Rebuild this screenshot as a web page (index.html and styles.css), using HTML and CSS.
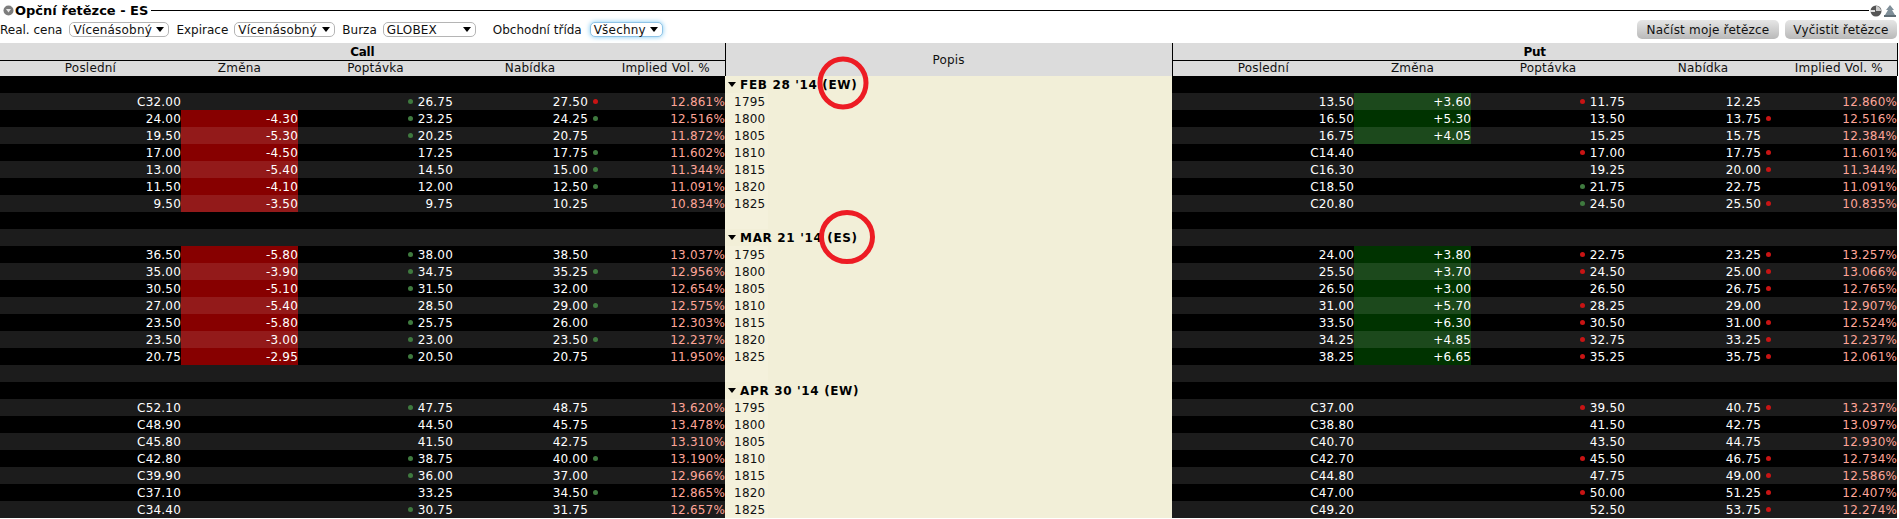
FILE: index.html
```html
<!DOCTYPE html>
<html lang="cs">

<head>
  <meta charset="UTF-8">
  <title>Opční řetězce - ES</title>
  <link rel="stylesheet" href="styles.css">
</head>

<body>
  <div class="titlebar">
    <svg class="title-icon" width="11" height="11" viewBox="0 0 11 11">
      <circle cx="5.5" cy="5.5" r="5" fill="#7d7d7d" />
      <path d="M3 4 H8 L5.5 7.5 Z" fill="#e8e8e8" />
    </svg>
    <span class="title">Opční řetězce - ES</span>
    <span class="title-line"></span>
    <svg class="title-tool" width="14" height="12" viewBox="0 0 14 12">
      <circle cx="7" cy="6" r="5.5" fill="#555" />
      <path d="M7 1 A5 5 0 0 1 12 6 L7 6 Z" fill="#ccc" />
      <rect x="1" y="5" width="5" height="2" fill="#ddd" />
    </svg>
    <svg class="title-tool" width="14" height="12" viewBox="0 0 14 12">
      <path d="M7 0 L11 5 H9 L12 10 H2 L5 5 H3 Z" fill="#7f8f99" />
      <rect x="1" y="10" width="12" height="2" fill="#5f6d75" />
    </svg>
  </div>

  <div class="toolbar">
    <label class="first">Real. cena</label>
    <div class="select w100">Vícenásobný<i></i></div>
    <label>Expirace</label>
    <div class="select w101">Vícenásobný<i></i></div>
    <label>Burza</label>
    <div class="select w93">GLOBEX<i></i></div>
    <label class="far">Obchodní třída</label>
    <div class="select w73 focus">Všechny<i></i></div>
    <div class="buttons">
      <button>Načíst moje řetězce</button>
      <button class="clear">Vyčistit řetězce</button>
    </div>
  </div>

  <div class="chain">
    <table>
      <colgroup>
        <col class="c181"><col class="c117"><col class="c155"><col class="c154"><col class="c118">
        <col class="c447">
        <col class="c182"><col class="c117"><col class="c154"><col class="c156"><col class="c116">
      </colgroup>
      <thead>
        <tr class="group">
          <th colspan="5">Call</th>
          <th rowspan="2" class="popis-head">Popis</th>
          <th colspan="5" class="edge">Put</th>
        </tr>
        <tr class="cols">
          <th>Poslední</th><th>Změna</th><th>Poptávka</th><th>Nabídka</th><th>Implied Vol. %</th>
          <th>Poslední</th><th>Změna</th><th>Poptávka</th><th>Nabídka</th><th class="edge">Implied Vol. %</th>
        </tr>
      </thead>
      <tbody id="rows"></tbody>
    </table>

    <svg class="mark m1" width="52" height="54" viewBox="0 0 52 54">
      <ellipse cx="26" cy="27" rx="23" ry="24" fill="none" stroke="#ed1c24" stroke-width="5" />
    </svg>
    <svg class="mark m2" width="60" height="54" viewBox="0 0 60 54">
      <ellipse cx="30" cy="27" rx="25.5" ry="24.5" fill="none" stroke="#ed1c24" stroke-width="5" />
    </svg>
  </div>

  <script src="chain.js"></script>
</body>

</html>
```

FILE: styles.css
```css
* {
  margin: 0;
  padding: 0;
  box-sizing: border-box;
}

body {
  font-family: "DejaVu Sans", sans-serif;
  font-size: 12px;
  letter-spacing: 0.2px;
  background-color: #fff;
  color: #111;
  height: 519px;
  overflow: hidden;
}

.titlebar {
  display: flex;
  align-items: center;
  height: 19px;
  padding: 2px 2px 0 3px;
}

.title {
  font-size: 13px;
  font-weight: bold;
  letter-spacing: 0;
  margin-left: 1px;
  color: #000;
}

.title-line {
  flex: 1;
  height: 1px;
  background-color: #000;
  margin-left: 3px;
}

.title-tool {
  flex: none;
}

.toolbar {
  display: flex;
  align-items: center;
  height: 24px;
  padding-bottom: 3px;
}

.toolbar label {
  margin-right: 6px;
  letter-spacing: 0;
}

.toolbar label.first {
  margin-right: 7px;
}

.toolbar label.far {
  margin-left: 10px;
  margin-right: 8px;
}

.select {
  position: relative;
  height: 15px;
  line-height: 14px;
  margin-right: 7px;
  padding-left: 3px;
  border: 1px solid #b5b5b5;
  border-radius: 5px;
  background-color: #fff;
}

.select i {
  position: absolute;
  right: 4px;
  top: 4px;
  border-left: 4px solid transparent;
  border-right: 4px solid transparent;
  border-top: 5px solid #000;
}

.select.w100 {
  width: 100px;
}

.select.w101 {
  width: 101px;
}

.select.w93 {
  width: 93px;
}

.select.w73 {
  width: 73px;
}

.select.focus {
  border-color: #8fc3e6;
  box-shadow: 0 0 5px #7cc8f2;
}

.buttons {
  display: flex;
  gap: 6px;
  margin-left: auto;
  padding-right: 2px;
}

.buttons button {
  width: 142px;
  height: 19px;
  border: none;
  border-radius: 5px;
  background: linear-gradient(#e6e6e6, #b9b9b9);
  font-family: inherit;
  font-size: 12px;
  letter-spacing: 0.2px;
  color: #111;
}

.buttons button.clear {
  width: 112px;
}

.chain {
  position: relative;
  width: 1897px;
}

table {
  width: 1897px;
  table-layout: fixed;
  border-collapse: collapse;
}

.c181 { width: 181px; }
.c182 { width: 182px; }
.c117 { width: 117px; }
.c155 { width: 155px; }
.c154 { width: 154px; }
.c156 { width: 156px; }
.c118 { width: 118px; }
.c116 { width: 116px; }
.c447 { width: 447px; }

thead th {
  background-color: #dcdcdc;
  font-weight: normal;
  text-align: center;
  overflow: hidden;
}

.group th {
  height: 17px;
  padding-top: 1px;
  border-bottom: 1px solid #000;
  font-weight: bold;
  letter-spacing: -0.3px;
  color: #000;
}

.cols th {
  height: 15px;
  line-height: 15px;
}

th.edge {
  border-right: 1px solid #000;
}

th.popis-head {
  padding-top: 2px;
  border-left: 1px solid #000;
  border-right: 1px solid #000;
  border-bottom: none;
  font-weight: normal;
  letter-spacing: 0.2px;
  color: #111;
}

tbody tr {
  height: 17px;
  background-color: #000;
}

tbody tr.odd {
  background-color: #1c1c1c;
}

tbody td {
  height: 17px;
  line-height: 15px;
  padding: 2px 0 0;
  text-align: right;
  color: #fff;
  white-space: nowrap;
  overflow: hidden;
}

td.down {
  background-color: #870000;
}

tr.odd td.down {
  background-color: #931a1a;
}

td.up {
  background-color: #003300;
}

tr.odd td.up {
  background-color: #1c491c;
}

td.iv {
  color: #ffa598;
}

td.ask {
  padding-right: 19px;
}

td.put-ask {
  padding-right: 20px;
}

td.desc {
  background: linear-gradient(to right, #f4f1dc 43px, #f2efd8 43px);
  color: #111;
  text-align: left;
  padding-left: 9px;
}

tr.expiry td.desc {
  background: #f2efd8;
  font-weight: bold;
  letter-spacing: 0.65px;
  color: #000;
  padding-left: 3px;
}

.arrow {
  display: inline-block;
  margin-right: 4px;
  vertical-align: 2px;
  border-left: 4px solid transparent;
  border-right: 4px solid transparent;
  border-top: 5px solid #000;
}

.dot {
  display: inline-block;
  width: 5px;
  height: 5px;
  border-radius: 50%;
  vertical-align: 2px;
}

.dot.g {
  background-color: #3f7a3f;
}

.dot.r {
  background-color: #c81414;
}

td.bid .dot {
  margin-right: 5px;
}

td.ask .dot {
  margin-left: 5px;
  margin-right: -10px;
}

.mark {
  position: absolute;
}

.m1 {
  left: 817px;
  top: 13px;
}

.m2 {
  left: 817px;
  top: 167px;
}
```

FILE: chain.js
```js
// radek: popis, call [last, chg, bid, ask, iv], put [last, chg, bid, ask, iv]
// g/r pred cislem = tecka
const blocks = [
  {
    label: "FEB 28 '14 (EW)",
    rows: [
      ["1795", "C32.00", "", "g26.75", "27.50r", "12.861%", "13.50", "+3.60", "r11.75", "12.25", "12.860%"],
      ["1800", "24.00", "-4.30", "g23.25", "24.25g", "12.516%", "16.50", "+5.30", "13.50", "13.75r", "12.516%"],
      ["1805", "19.50", "-5.30", "g20.25", "20.75", "11.872%", "16.75", "+4.05", "15.25", "15.75", "12.384%"],
      ["1810", "17.00", "-4.50", "17.25", "17.75g", "11.602%", "C14.40", "", "r17.00", "17.75r", "11.601%"],
      ["1815", "13.00", "-5.40", "14.50", "15.00g", "11.344%", "C16.30", "", "19.25", "20.00r", "11.344%"],
      ["1820", "11.50", "-4.10", "12.00", "12.50g", "11.091%", "C18.50", "", "g21.75", "22.75", "11.091%"],
      ["1825", "9.50", "-3.50", "9.75", "10.25", "10.834%", "C20.80", "", "g24.50", "25.50r", "10.835%"]
    ]
  },
  {
    label: "MAR 21 '14 (ES)",
    rows: [
      ["1795", "36.50", "-5.80", "g38.00", "38.50", "13.037%", "24.00", "+3.80", "r22.75", "23.25r", "13.257%"],
      ["1800", "35.00", "-3.90", "g34.75", "35.25g", "12.956%", "25.50", "+3.70", "r24.50", "25.00r", "13.066%"],
      ["1805", "30.50", "-5.10", "g31.50", "32.00", "12.654%", "26.50", "+3.00", "26.50", "26.75r", "12.765%"],
      ["1810", "27.00", "-5.40", "28.50", "29.00g", "12.575%", "31.00", "+5.70", "r28.25", "29.00", "12.907%"],
      ["1815", "23.50", "-5.80", "g25.75", "26.00", "12.303%", "33.50", "+6.30", "r30.50", "31.00r", "12.524%"],
      ["1820", "23.50", "-3.00", "g23.00", "23.50g", "12.237%", "34.25", "+4.85", "r32.75", "33.25r", "12.237%"],
      ["1825", "20.75", "-2.95", "g20.50", "20.75", "11.950%", "38.25", "+6.65", "r35.25", "35.75r", "12.061%"]
    ]
  },
  {
    label: "APR 30 '14 (EW)",
    rows: [
      ["1795", "C52.10", "", "g47.75", "48.75", "13.620%", "C37.00", "", "r39.50", "40.75r", "13.237%"],
      ["1800", "C48.90", "", "44.50", "45.75", "13.478%", "C38.80", "", "41.50", "42.75", "13.097%"],
      ["1805", "C45.80", "", "41.50", "42.75", "13.310%", "C40.70", "", "43.50", "44.75", "12.930%"],
      ["1810", "C42.80", "", "g38.75", "40.00g", "13.190%", "C42.70", "", "r45.50", "46.75r", "12.734%"],
      ["1815", "C39.90", "", "g36.00", "37.00", "12.966%", "C44.80", "", "47.75", "49.00r", "12.586%"],
      ["1820", "C37.10", "", "33.25", "34.50g", "12.865%", "C47.00", "", "r50.00", "51.25r", "12.407%"],
      ["1825", "C34.40", "", "g30.75", "31.75", "12.657%", "C49.20", "", "52.50", "53.75r", "12.274%"]
    ]
  }
];

function bidCell(v) {
  const m = v.match(/^([gr])(.*)$/);
  if (m) return `<td class="bid"><span class="dot ${m[1]}"></span>${m[2]}</td>`;
  return `<td class="bid">${v}</td>`;
}

function askCell(v, cls) {
  const m = v.match(/^(.*)([gr])$/);
  if (m) return `<td class="ask ${cls}">${m[1]}<span class="dot ${m[2]}"></span></td>`;
  return `<td class="ask ${cls}">${v}</td>`;
}

function chgCell(v) {
  if (v[0] === "-") return `<td class="down">${v}</td>`;
  if (v[0] === "+") return `<td class="up">${v}</td>`;
  return "<td></td>";
}

let n = 0;
let html = "";

function tr(cells, cls) {
  const odd = n % 2 === 1 ? "odd" : "";
  n++;
  html += `<tr class="${odd} ${cls}">${cells}</tr>`;
}

blocks.forEach(function (b, i) {
  // mezera pred druhym a tretim blokem
  if (i > 0) tr('<td colspan="5"></td><td class="desc"></td><td colspan="5"></td>', "");
  tr(`<td colspan="5"></td><td class="desc"><span class="arrow"></span>${b.label}</td><td colspan="5"></td>`, "expiry");
  b.rows.forEach(function (r) {
    tr(
      `<td>${r[1]}</td>${chgCell(r[2])}${bidCell(r[3])}${askCell(r[4], "")}<td class="iv">${r[5]}</td>` +
      `<td class="desc">${r[0]}</td>` +
      `<td>${r[6]}</td>${chgCell(r[7])}${bidCell(r[8])}${askCell(r[9], "put-ask")}<td class="iv">${r[10]}</td>`,
      ""
    );
  });
});

document.getElementById("rows").innerHTML = html;
```
